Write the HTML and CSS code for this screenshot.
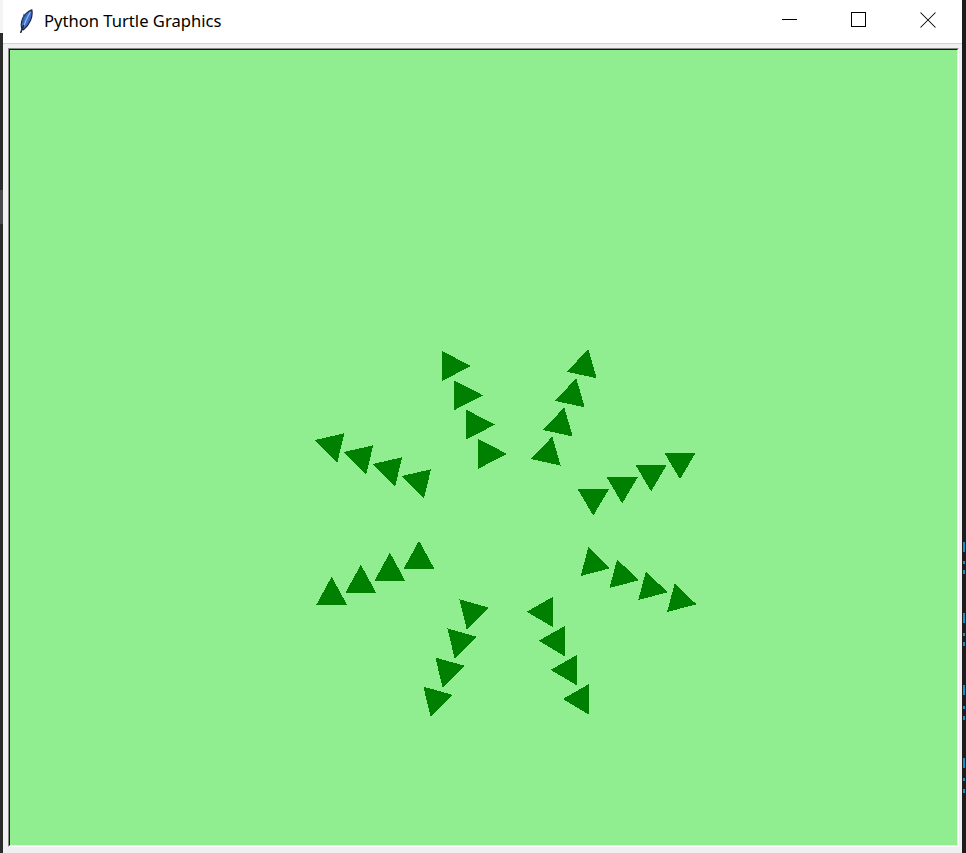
FILE: index.html
```html
<!DOCTYPE html>
<html lang="en">
<head>
<meta charset="utf-8">
<title>Python Turtle Graphics</title>
<link rel="stylesheet" href="styles.css">
</head>
<body>
<div class="desk">
  <div class="edge edge-left">
    <svg width="3" height="853" viewBox="0 0 3 853">
      <rect x="0" y="0" width="3" height="853" fill="#2b2b2b"/>
      <rect x="0" y="0" width="3" height="33" fill="#f4f4f4"/>
      <rect x="0" y="190" width="3" height="34" fill="#4a4a4e"/>
    </svg>
  </div>
  <div class="window">
    <div class="titlebar">
      <div class="title-left">
        <svg class="app-icon" width="14" height="24" viewBox="0 0 14 24">
          <path d="M3 20.2 C0.6 13.5 4.2 4.5 12.8 0.8 C14.2 7.5 11 15.5 4.4 20.8 Z" fill="#3f70c6" stroke="#1b2742" stroke-width="1.2"/>
          <path d="M11.2 3.2 C8.6 7.5 6.4 12 4.6 17.5" fill="none" stroke="#9dbcf0" stroke-width="1.1"/>
          <path d="M5.2 4.8 C4 8 3.6 11.5 4 14" fill="none" stroke="#2a4f96" stroke-width="1"/>
          <path d="M1.8 23.4 L4.6 16.5" fill="none" stroke="#1b2742" stroke-width="1.5" stroke-linecap="round"/>
        </svg>
        <span class="title-text">Python Turtle Graphics</span>
      </div>
      <div class="controls">
        <div class="ctl"><span class="ico-min"></span></div>
        <div class="ctl"><span class="ico-max"></span></div>
        <div class="ctl">
          <svg class="ico-close" width="16" height="16" viewBox="0 0 16 16">
            <path d="M0.5 0.5 L15.5 15.5 M15.5 0.5 L0.5 15.5" stroke="#000" stroke-width="1.05" fill="none"/>
          </svg>
        </div>
      </div>
    </div>
    <div class="client">
      <div class="canvas-outer">
        <div class="canvas-inner">
          <svg class="turtle-canvas" width="947" height="795" viewBox="10 50 947 795" shape-rendering="crispEdges">
            <rect x="10" y="50" width="947" height="795" fill="#90ee90"/>
            <g fill="#008000">
              <polygon id="ta" points="442,351 442,381 471,366"/>
              <use href="#ta" x="12" y="29.3"/>
              <use href="#ta" x="24" y="58.6"/>
              <use href="#ta" x="36" y="87.9"/>

              <polygon id="tb" points="588.3,349.3 566.7,371.7 596.7,378.3"/>
              <use href="#tb" x="-12" y="29.1"/>
              <use href="#tb" x="-24" y="58.2"/>
              <use href="#tb" x="-36" y="87.3"/>

              <polygon id="tc" points="664.3,452.7 695.7,452.7 680,479.3"/>
              <use href="#tc" x="-28.9" y="12.1"/>
              <use href="#tc" x="-57.8" y="24.2"/>
              <use href="#tc" x="-86.7" y="36.3"/>

              <polygon id="td" points="588.3,547.3 580.7,576 610,568.3"/>
              <use href="#td" x="28.8" y="12"/>
              <use href="#td" x="57.6" y="24"/>
              <use href="#td" x="86.4" y="36"/>

              <polygon id="te" points="553,596.7 553,627.3 526.7,611.7"/>
              <use href="#te" x="12" y="29.1"/>
              <use href="#te" x="24" y="58.2"/>
              <use href="#te" x="36" y="87.3"/>

              <polygon id="tf" points="459.3,599.3 489,607.7 466.7,629.3"/>
              <use href="#tf" x="-12" y="29.1"/>
              <use href="#tf" x="-24" y="58.2"/>
              <use href="#tf" x="-36" y="87.3"/>

              <polygon id="tg" points="316,605.3 347.3,605.3 331.7,576.7"/>
              <use href="#tg" x="29.1" y="-12"/>
              <use href="#tg" x="58.2" y="-24"/>
              <use href="#tg" x="87.3" y="-36"/>

              <polygon id="th" points="315,440 344.3,433.3 337.3,462.7"/>
              <use href="#th" x="28.9" y="12"/>
              <use href="#th" x="57.8" y="24"/>
              <use href="#th" x="86.7" y="36"/>
            </g>
          </svg>
        </div>
      </div>
    </div>
  </div>
  <div class="edge edge-right">
    <svg width="4" height="853" viewBox="0 0 4 853">
      <rect x="0" y="0" width="4" height="853" fill="#1c1c1c"/>
      <g fill="#1a8fc0">
        <rect x="1" y="542" width="2" height="10"/>
        <rect x="1" y="561" width="2" height="3"/>
        <rect x="1" y="570" width="2" height="4"/>
        <rect x="1" y="613" width="2" height="10"/>
        <rect x="1" y="633" width="2" height="3"/>
        <rect x="1" y="642" width="2" height="4"/>
        <rect x="1" y="685" width="2" height="10"/>
        <rect x="1" y="706" width="2" height="3"/>
        <rect x="1" y="716" width="2" height="4"/>
        <rect x="1" y="758" width="2" height="10"/>
        <rect x="1" y="778" width="2" height="3"/>
        <rect x="1" y="789" width="2" height="4"/>
      </g>
    </svg>
  </div>
</div>
</body>
</html>
```
FILE: styles.css
```css
html, body {
  margin: 0;
  padding: 0;
}

body {
  width: 966px;
  height: 853px;
  overflow: hidden;
  background: #1c1c1c;
  font-family: "Noto Sans", "Open Sans", sans-serif;
}

.desk {
  display: flex;
  width: 966px;
  height: 853px;
}

.edge {
  flex: none;
  height: 853px;
}

.edge svg {
  display: block;
}

.edge-left {
  width: 3px;
}

.edge-right {
  width: 4px;
}

.window {
  flex: none;
  width: 959px;
  height: 853px;
  display: flex;
  flex-direction: column;
  background: #f0f0f0;
}

.titlebar {
  flex: none;
  height: 43px;
  background: #ffffff;
  border-bottom: 1px solid #d2d2d2;
  display: flex;
  justify-content: space-between;
  align-items: stretch;
}

.title-left {
  display: flex;
  align-items: center;
  padding-left: 16px;
  padding-bottom: 2px;
}

.app-icon {
  display: block;
  margin-right: 11px;
  margin-top: 1px;
}

.title-text {
  font-size: 16.6px;
  color: #000;
  line-height: 20px;
  white-space: nowrap;
}

.controls {
  display: flex;
}

.ctl {
  width: 69px;
  display: flex;
  align-items: center;
  justify-content: center;
  padding-bottom: 4px;
}

.ico-min {
  display: block;
  width: 15px;
  height: 1px;
  background: #000;
}

.ico-max {
  display: block;
  width: 13px;
  height: 13px;
  border: 1px solid #000;
}

.ico-close {
  display: block;
}

.client {
  flex: 1;
  padding: 4px 3px 0 5px;
}

.canvas-outer {
  border-style: solid;
  border-width: 1px;
  border-color: #8a8a8a #ffffff #ffffff #8a8a8a;
}

.canvas-inner {
  border-style: solid;
  border-width: 1px;
  border-color: #141414 #e2f5e2 #e2f5e2 #141414;
}

.turtle-canvas {
  display: block;
}
```
